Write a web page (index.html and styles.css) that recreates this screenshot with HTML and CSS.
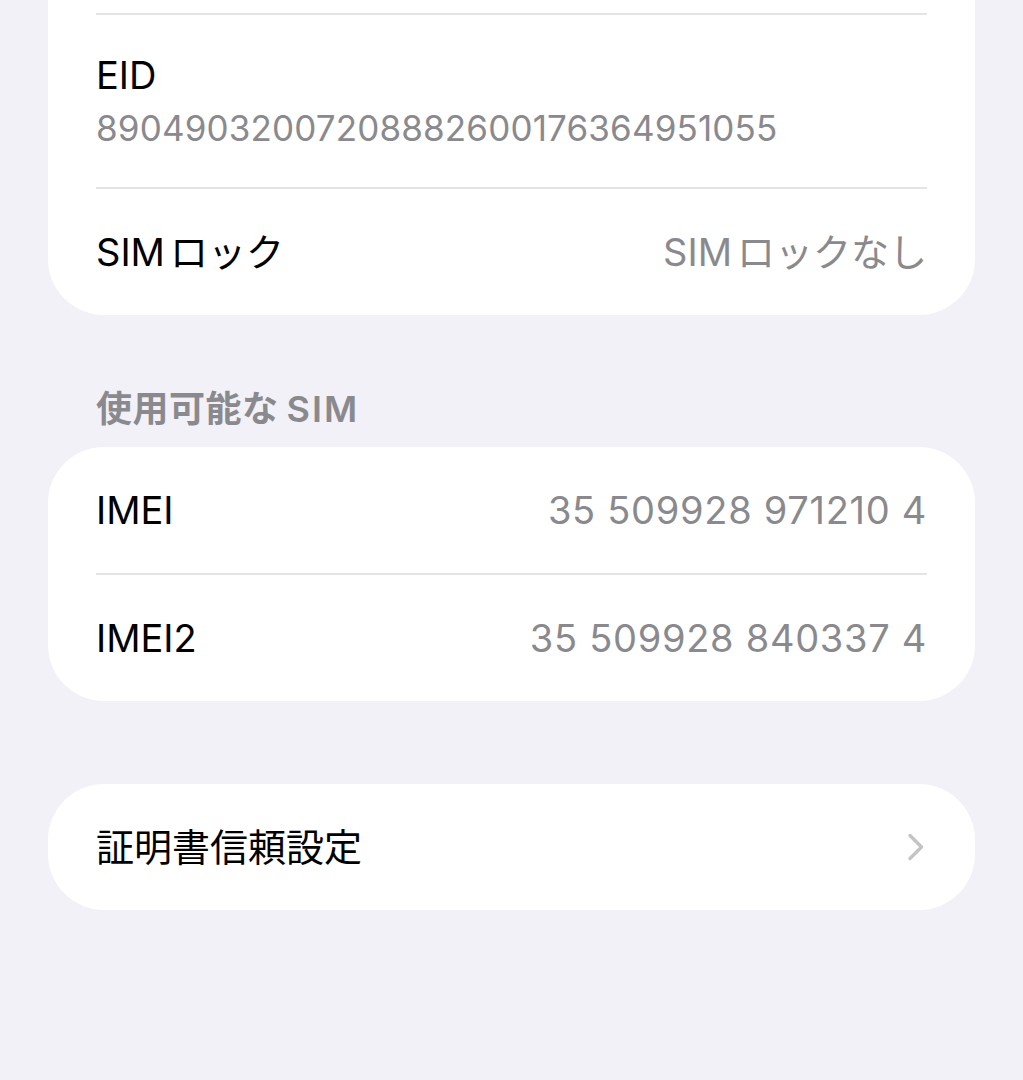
FILE: index.html
```html
<!DOCTYPE html>
<html lang="ja">

<head>
  <meta charset="UTF-8">
  <meta name="viewport" content="width=device-width, initial-scale=1.0">
  <title>情報</title>
  <link rel="stylesheet" href="styles.css">
</head>

<body>
  <div class="settings">
    <div class="card card-continued">
      <div class="row-clip"></div>
      <div class="row row-stacked">
        <span class="label">EID</span>
        <span class="subvalue">89049032007208882600176364951055</span>
      </div>
      <div class="row">
        <span class="label"><span class="latin">SIM</span>ロック</span>
        <span class="value"><span class="latin">SIM</span>ロックなし</span>
      </div>
    </div>

    <div class="group-header">使用可能な<span class="latin-head">SIM</span></div>
    <div class="card">
      <div class="row">
        <span class="label">IMEI</span>
        <span class="value number">35 509928 971210 4</span>
      </div>
      <div class="row">
        <span class="label">IMEI2</span>
        <span class="value number">35 509928 840337 4</span>
      </div>
    </div>

    <div class="card card-spaced">
      <div class="row">
        <span class="label">証明書信頼設定</span>
        <svg class="chevron" width="20" height="30" viewBox="0 0 20 30">
          <path d="M4 3.5 L15.5 15 L4 26.5" fill="none" stroke="#c4c4c7" stroke-width="3.4" stroke-linecap="round" stroke-linejoin="round" />
        </svg>
      </div>
    </div>
  </div>
</body>

</html>
```

FILE: styles.css
```css
body {
  margin: 0;
  background-color: #f2f1f7;
  font-family: 'Inter', 'Noto Sans CJK JP', sans-serif;
  color: #000;
}

.settings {
  padding: 0 48px;
  height: 1080px;
}

.card {
  background-color: #fff;
  border-radius: 56px;
  overflow: hidden;
}

.card-continued {
  border-top-left-radius: 0;
  border-top-right-radius: 0;
}

.card-spaced {
  margin-top: 83px;
}

.row-clip {
  height: 13px;
}

.row {
  display: flex;
  align-items: center;
  justify-content: space-between;
  height: 126px;
  margin: 0 48px 0 48px;
  font-size: 38px;
}

.row + .row,
.row-clip + .row {
  border-top: 2px solid #e3e3e8;
}

.row-stacked {
  flex-direction: column;
  align-items: flex-start;
  justify-content: center;
  height: 172px;
  gap: 5px;
}

.label {
  line-height: 48px;
}

.value {
  line-height: 48px;
  color: #8a8a8e;
}

.number {
  letter-spacing: 0.7px;
}

.latin {
  margin-right: 5px;
}

.subvalue {
  font-size: 35px;
  line-height: 48px;
  letter-spacing: 0.15px;
  color: #8a8a8e;
}

.group-header {
  padding: 70px 48px 14px;
  font-size: 36px;
  line-height: 48px;
  font-weight: 600;
  letter-spacing: 0.5px;
  color: #8a8a8e;
}

.latin-head {
  margin-left: 8px;
  letter-spacing: 2px;
}

.chevron {
  margin-right: 1px;
}
```
